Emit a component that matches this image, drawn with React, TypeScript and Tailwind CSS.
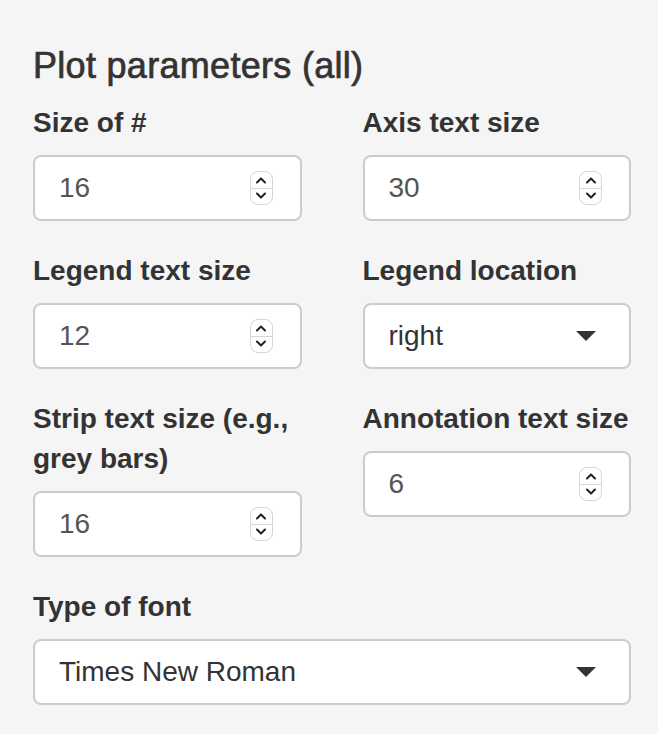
import React from 'react'

// spinner control drawn at the right of numeric inputs
const Spinner = () => (
  <div className="flex h-[34px] w-[23px] flex-col overflow-hidden rounded-[8px] border border-[#d6d6d6] bg-white">
    <div className="flex flex-1 items-center justify-center border-b border-[#d6d6d6]">
      <svg width="12" height="8" viewBox="0 0 12 8" fill="none">
        <path d="M2 6.5 L6 2.5 L10 6.5" stroke="#222" strokeWidth="2" strokeLinecap="round" strokeLinejoin="round" />
      </svg>
    </div>
    <div className="flex flex-1 items-center justify-center">
      <svg width="12" height="8" viewBox="0 0 12 8" fill="none">
        <path d="M2 1.5 L6 5.5 L10 1.5" stroke="#222" strokeWidth="2" strokeLinecap="round" strokeLinejoin="round" />
      </svg>
    </div>
  </div>
)

const Caret = () => (
  <svg width="20" height="10" viewBox="0 0 20 10">
    <path d="M0 0 L20 0 L10 10 Z" fill="#333" />
  </svg>
)

interface FieldProps {
  label: React.ReactNode
  value: string
  kind: 'number' | 'select'
}

const Field: React.FC<FieldProps> = ({ label, value, kind }) => (
  <div className="mb-[30px]">
    <label className="mb-[12px] block text-[28px] font-bold leading-[40px] text-[#333]">{label}</label>
    <div className="flex h-[66px] items-center justify-between rounded-[8px] border-2 border-[#cccccc] bg-white pl-[24px]">
      {kind === 'number' ? (
        <>
          <span className="text-[28px] text-[#555]">{value}</span>
          <div className="mr-[27px]">
            <Spinner />
          </div>
        </>
      ) : (
        <>
          <span className="text-[28px] text-[#333]">{value}</span>
          <div className="mr-[33px] flex items-center">
            <Caret />
          </div>
        </>
      )}
    </div>
  </div>
)

const App: React.FC = () => {
  return (
    <div className="min-h-[734px] w-[658px] bg-[#f5f5f5] pl-[33px] pr-[27px] pt-[46px] font-['Liberation_Sans',Arial,sans-serif]">
      <h4 className="mb-[17px] text-[36px] leading-[40px] tracking-[0.3px] text-[#333] [-webkit-text-stroke:0.7px_#333]">
        Plot parameters (all)
      </h4>
      <div className="grid grid-cols-2 gap-x-[61px]">
        <div>
          <Field label="Size of #" value="16" kind="number" />
          <Field label="Legend text size" value="12" kind="number" />
          <Field label={<>Strip text size (e.g.,<br />grey bars)</>} value="16" kind="number" />
        </div>
        <div>
          <Field label="Axis text size" value="30" kind="number" />
          <Field label="Legend location" value="right" kind="select" />
          <Field label="Annotation text size" value="6" kind="number" />
        </div>
      </div>
      <Field label="Type of font" value="Times New Roman" kind="select" />
    </div>
  )
}

export default App
